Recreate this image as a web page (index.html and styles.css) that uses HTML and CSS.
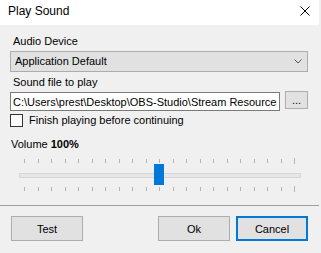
FILE: index.html
```html
<!DOCTYPE html>
<html>
<head>
    <title>Play Sound</title>
    <link rel="stylesheet" href="styles.css">
</head>
<body>
    <div class="window">
        <div class="titlebar">
            <span class="title">Play Sound</span>
            <svg class="close" width="10" height="10" viewBox="0 0 10 10">
                <path d="M0.5 0.5 L9.5 9.5 M9.5 0.5 L0.5 9.5" stroke="#000" stroke-width="1" fill="none"/>
            </svg>
        </div>
        <div class="content">
            <div class="label">Audio Device</div>
            <div class="combo">
                <span>Application Default</span>
                <svg width="8" height="5" viewBox="0 0 8 5">
                    <path d="M0.5 0.5 L4 4 L7.5 0.5" stroke="#555" stroke-width="1" fill="none"/>
                </svg>
            </div>
            <div class="label label-file">Sound file to play</div>
            <div class="file-row">
                <input class="file-input" type="text" value="C:\Users\prest\Desktop\OBS-Studio\Stream Resources\alert.wav">
                <button class="browse">...</button>
            </div>
            <div class="check-row">
                <span class="checkbox"></span>
                <span>Finish playing before continuing</span>
            </div>
            <div class="volume-row">
                <span>Volume</span>
                <b class="volume-value">100%</b>
            </div>
            <div class="slider">
                <div class="ticks top"></div>
                <div class="track"></div>
                <div class="ticks bottom"></div>
                <div class="thumb"></div>
            </div>
        </div>
        <div class="separator"></div>
        <div class="actions">
            <button class="btn">Test</button>
            <div class="spacer"></div>
            <button class="btn">Ok</button>
            <button class="btn default">Cancel</button>
        </div>
    </div>
    <script>
        document.querySelectorAll('.ticks').forEach(row => {
            for (let i = 0; i <= 20; i++) {
                const tick = document.createElement('span');
                tick.className = i === 20 ? 'tick last' : 'tick';
                row.appendChild(tick);
            }
        });
    </script>
</body>
</html>
```

FILE: styles.css
```css
body {
    margin: 0;
    background-color: #f0f0f0;
    font-family: "Liberation Sans", Arial, sans-serif;
    font-size: 11px;
    line-height: 13px;
    color: #000;
}
.window {
    width: 321px;
    height: 253px;
}
.titlebar {
    width: 319px;
    height: 25px;
    background-color: #fff;
    display: flex;
    justify-content: space-between;
    align-items: flex-start;
    padding: 4px 9px 0 8px;
    box-sizing: border-box;
}
.title {
    font-size: 12px;
    line-height: 14px;
}
.close {
    margin-top: 2px;
}
.content {
    padding: 10px 13px 0 10px;
}
.label {
    padding-left: 3px;
    height: 13px;
}
.label-file {
    margin-top: 4px;
}
.combo {
    margin-top: 3px;
    height: 21px;
    box-sizing: border-box;
    border: 1px solid #adadad;
    background-color: #e1e1e1;
    display: flex;
    justify-content: space-between;
    align-items: center;
    padding: 0 5px 0 4px;
}
.file-row {
    margin-top: 2px;
    display: flex;
    align-items: flex-start;
    gap: 5px;
}
.file-input {
    margin: 1px 0 0 0;
    width: 270px;
    height: 19px;
    box-sizing: border-box;
    border: 1px solid #7a7a7a;
    background-color: #fff;
    padding: 0 2px;
    font-family: inherit;
    font-size: 11px;
    line-height: 13px;
    color: #000;
    outline: none;
}
.browse {
    width: 23px;
    height: 18px;
    padding: 0;
    margin: 0;
    border: 1px solid #adadad;
    background-color: #e1e1e1;
    font-family: inherit;
    font-size: 11px;
    line-height: 13px;
    color: #000;
}
.check-row {
    margin-top: 3px;
    height: 13px;
    display: flex;
    align-items: center;
    gap: 6px;
}
.checkbox {
    width: 13px;
    height: 13px;
    box-sizing: border-box;
    border: 1px solid #333;
    background-color: #fff;
}
.volume-row {
    margin-top: 11px;
    padding-left: 1px;
    height: 13px;
    display: flex;
    gap: 3px;
}
.volume-value {
    font-weight: bold;
}
.slider {
    position: relative;
    margin-top: 8px;
}
.ticks {
    height: 4px;
    display: flex;
    justify-content: space-between;
    align-items: center;
    padding: 0 13px 0 14px;
}
.tick {
    width: 1px;
    height: 4px;
    background-color: #b4b4b4;
}
.tick.last {
    height: 6px;
}
.track {
    margin: 10px 7px 9px 9px;
    height: 5px;
    box-sizing: border-box;
    border: 1px solid #d6d6d6;
    background-color: #e7e7e7;
}
.thumb {
    position: absolute;
    left: 144px;
    top: 5px;
    width: 10px;
    height: 21px;
    background-color: #0078d7;
}
.separator {
    margin-top: 14px;
    width: 319px;
    height: 1px;
    background-color: #a0a0a0;
}
.actions {
    margin-top: 10px;
    display: flex;
    gap: 6px;
    padding: 0 13px 0 11px;
}
.spacer {
    flex: 1;
}
.btn {
    width: 72px;
    height: 25px;
    margin: 0;
    padding: 0;
    border: 1px solid #adadad;
    background-color: #e1e1e1;
    font-family: inherit;
    font-size: 11px;
    color: #000;
}
.btn.default {
    border: 2px solid #0078d7;
}
```
